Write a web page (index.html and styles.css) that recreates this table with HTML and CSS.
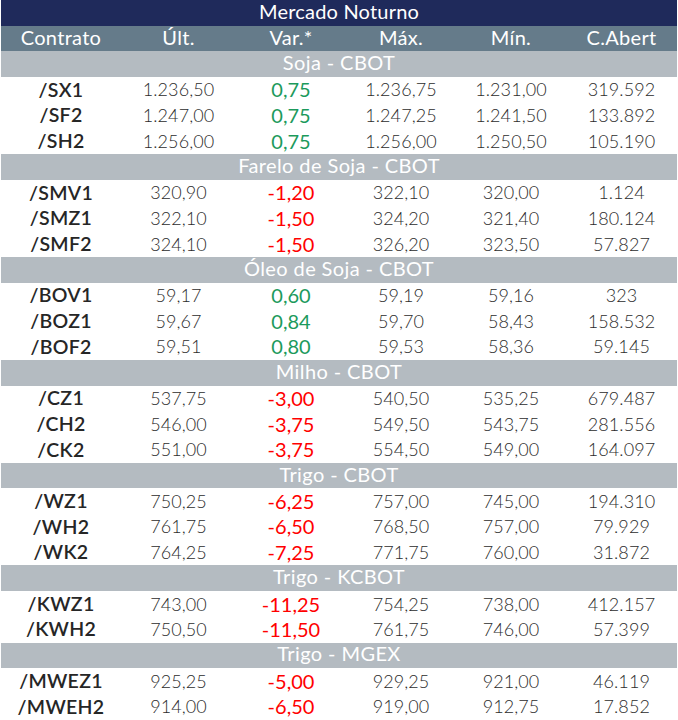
FILE: index.html
```html
<!DOCTYPE html>
<html lang="pt-BR">
<head>
<meta charset="utf-8">
<title>Mercado Noturno</title>
<link rel="stylesheet" href="styles.css">
</head>
<body>
<div class="sheet">
  <div class="title">Mercado Noturno</div>
  <div class="hd">Contrato</div><div class="hd">Últ.</div><div class="hd">Var.*</div><div class="hd">Máx.</div><div class="hd">Mín.</div><div class="hd">C.Abert</div>

  <div class="sec">Soja - CBOT</div>
  <div class="c">/SX1</div><div class="n">1.236,50</div><div class="up">0,75</div><div class="n">1.236,75</div><div class="n">1.231,00</div><div class="n">319.592</div>
  <div class="c">/SF2</div><div class="n">1.247,00</div><div class="up">0,75</div><div class="n">1.247,25</div><div class="n">1.241,50</div><div class="n">133.892</div>
  <div class="c">/SH2</div><div class="n">1.256,00</div><div class="up">0,75</div><div class="n">1.256,00</div><div class="n">1.250,50</div><div class="n">105.190</div>

  <div class="sec">Farelo de Soja - CBOT</div>
  <div class="c">/SMV1</div><div class="n">320,90</div><div class="dn">-1,20</div><div class="n">322,10</div><div class="n">320,00</div><div class="n">1.124</div>
  <div class="c">/SMZ1</div><div class="n">322,10</div><div class="dn">-1,50</div><div class="n">324,20</div><div class="n">321,40</div><div class="n">180.124</div>
  <div class="c">/SMF2</div><div class="n">324,10</div><div class="dn">-1,50</div><div class="n">326,20</div><div class="n">323,50</div><div class="n">57.827</div>

  <div class="sec">Óleo de Soja - CBOT</div>
  <div class="c">/BOV1</div><div class="n">59,17</div><div class="up">0,60</div><div class="n">59,19</div><div class="n">59,16</div><div class="n">323</div>
  <div class="c">/BOZ1</div><div class="n">59,67</div><div class="up">0,84</div><div class="n">59,70</div><div class="n">58,43</div><div class="n">158.532</div>
  <div class="c">/BOF2</div><div class="n">59,51</div><div class="up">0,80</div><div class="n">59,53</div><div class="n">58,36</div><div class="n">59.145</div>

  <div class="sec">Milho - CBOT</div>
  <div class="c">/CZ1</div><div class="n">537,75</div><div class="dn">-3,00</div><div class="n">540,50</div><div class="n">535,25</div><div class="n">679.487</div>
  <div class="c">/CH2</div><div class="n">546,00</div><div class="dn">-3,75</div><div class="n">549,50</div><div class="n">543,75</div><div class="n">281.556</div>
  <div class="c">/CK2</div><div class="n">551,00</div><div class="dn">-3,75</div><div class="n">554,50</div><div class="n">549,00</div><div class="n">164.097</div>

  <div class="sec">Trigo - CBOT</div>
  <div class="c">/WZ1</div><div class="n">750,25</div><div class="dn">-6,25</div><div class="n">757,00</div><div class="n">745,00</div><div class="n">194.310</div>
  <div class="c">/WH2</div><div class="n">761,75</div><div class="dn">-6,50</div><div class="n">768,50</div><div class="n">757,00</div><div class="n">79.929</div>
  <div class="c">/WK2</div><div class="n">764,25</div><div class="dn">-7,25</div><div class="n">771,75</div><div class="n">760,00</div><div class="n">31.872</div>

  <div class="sec">Trigo - KCBOT</div>
  <div class="c">/KWZ1</div><div class="n">743,00</div><div class="dn">-11,25</div><div class="n">754,25</div><div class="n">738,00</div><div class="n">412.157</div>
  <div class="c">/KWH2</div><div class="n">750,50</div><div class="dn">-11,50</div><div class="n">761,75</div><div class="n">746,00</div><div class="n">57.399</div>

  <div class="sec">Trigo - MGEX</div>
  <div class="c">/MWEZ1</div><div class="n">925,25</div><div class="dn">-5,00</div><div class="n">929,25</div><div class="n">921,00</div><div class="n">46.119</div>
  <div class="c">/MWEH2</div><div class="n">914,00</div><div class="dn">-6,50</div><div class="n">919,00</div><div class="n">912,75</div><div class="n">17.852</div>
</div>
</body>
</html>
```
FILE: styles.css
```css
html, body {
  margin: 0;
  padding: 0;
  background: #ffffff;
}
body {
  font-family: "Lato", "Liberation Sans", sans-serif;
  font-size: 18px;
}
.sheet {
  width: 676px;
  margin-left: 1px;
  display: grid;
  grid-template-columns: 120px 115px 110px 110px 110px 111px;
  grid-auto-rows: 25.714px;
}
.sheet > div {
  display: flex;
  align-items: center;
  justify-content: center;
  white-space: nowrap;
  line-height: 1;
  padding-bottom: 1px;
}
.title {
  grid-column: 1 / -1;
  background: #1f2a5b;
  color: #ffffff;
  font-size: 20px;
  letter-spacing: 0.2px;
}
.sheet > .title,
.sheet > .hd,
.sheet > .sec {
  padding-bottom: 4px;
}
.hd {
  background: #657b8a;
  color: #ffffff;
  font-size: 20px;
  letter-spacing: 0.3px;
}
.sec {
  grid-column: 1 / -1;
  background: #b4bbc1;
  color: #ffffff;
  font-size: 20px;
  letter-spacing: 0.4px;
}
.c {
  color: #262626;
  font-weight: 600;
  font-size: 19.5px;
  letter-spacing: 0.3px;
}
.n {
  color: #2c2c2c;
  font-weight: 300;
  font-size: 18px;
  letter-spacing: 0.1px;
}
.up {
  color: #1c9a5c;
  font-weight: 400;
  font-size: 20px;
}
.dn {
  color: #ff0000;
  font-weight: 400;
  font-size: 20px;
}
```
